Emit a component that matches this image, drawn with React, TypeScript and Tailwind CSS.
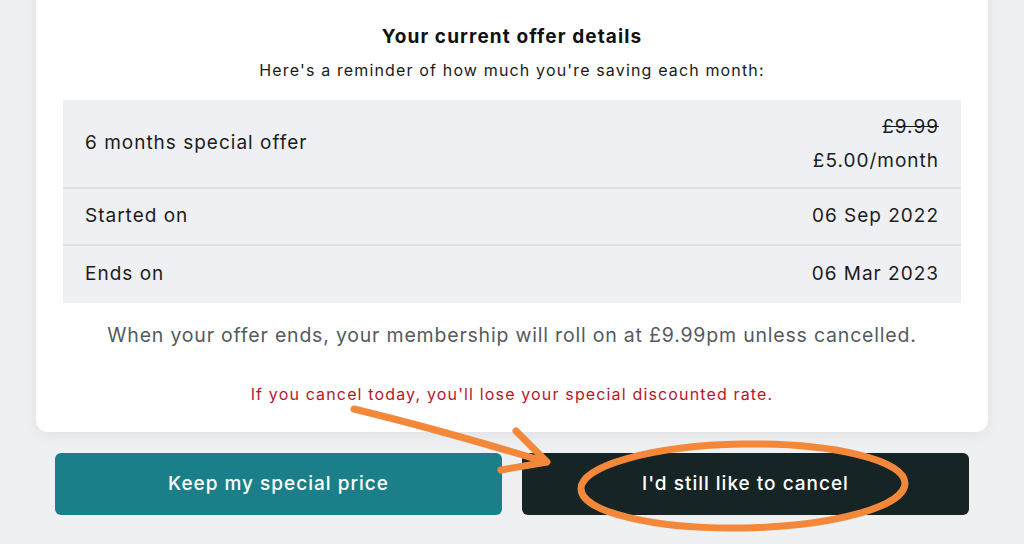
import React from "react"

const rows = [
  { label: "Started on", value: "06 Sep 2022" },
  { label: "Ends on", value: "06 Mar 2023" },
]

function Annotations() {
  // hand-drawn orange arrow + circle over the cancel button
  return (
    <svg
      className="pointer-events-none absolute left-0 top-0"
      width="1024"
      height="544"
      viewBox="0 0 1024 544"
      fill="none"
    >
      <g stroke="#f4883a" strokeWidth="7" strokeLinecap="round" strokeLinejoin="round">
        <path d="M354 409 C420 425 490 445 546 462" />
        <path d="M516 431 L547 462 L501 470" />
        <ellipse cx="743" cy="486" rx="162" ry="42" transform="rotate(-1 743 486)" />
      </g>
    </svg>
  )
}

export default function App() {
  return (
    <div
      className="relative h-[544px] w-[1024px] overflow-hidden bg-[#eff0f2]"
      style={{ fontFamily: "Inter, 'Noto Sans', sans-serif" }}
    >
      <div className="mx-auto -mt-[20px] flex w-[952px] flex-col items-center rounded-b-xl bg-white px-[27px] pb-[27px] pt-[44px] shadow-[0_4px_16px_rgba(0,0,0,0.06)]">
        <h2 className="text-[19px] font-bold leading-[26px] tracking-[1.1px] text-[#111]">
          Your current offer details
        </h2>
        <p className="mt-[9px] text-[16px] leading-[22px] tracking-[1.15px] text-[#1a1a1a]">
          Here's a reminder of how much you're saving each month:
        </p>

        <div className="mt-[19px] w-full bg-[#eff0f3] text-[19px] tracking-[1px] text-[#1c1c1c]">
          <div className="flex h-[89px] items-center justify-between border-b-2 border-[#dfe1e5] px-[22px]">
            <span>6 months special offer</span>
            <div className="flex flex-col items-end leading-[34px]">
              <span className="line-through">£9.99</span>
              <span>£5.00/month</span>
            </div>
          </div>
          {rows.map((r, i) => (
            <div
              key={r.label}
              className={`flex h-[57px] items-center justify-between px-[22px] ${
                i === 0 ? "border-b-2 border-[#dfe1e5]" : ""
              }`}
            >
              <span>{r.label}</span>
              <span>{r.value}</span>
            </div>
          ))}
        </div>

        <p className="mt-[18px] text-[19.5px] leading-[28px] tracking-[0.8px] text-[#555a5e]">
          When your offer ends, your membership will roll on at £9.99pm unless cancelled.
        </p>
        <p className="mt-[34px] text-[16px] leading-[22px] tracking-[1.15px] text-[#b5172c]">
          If you cancel today, you'll lose your special discounted rate.
        </p>
      </div>

      <div className="mx-auto mt-[21px] flex w-[914px] gap-[20px]">
        <button className="flex h-[62px] flex-1 items-center justify-center rounded-md bg-[#1b7f89] text-[19px] font-medium tracking-[1px] text-white">
          Keep my special price
        </button>
        <button className="flex h-[62px] flex-1 items-center justify-center rounded-md bg-[#172425] text-[19px] font-medium tracking-[1px] text-white">
          I'd still like to cancel
        </button>
      </div>

      <Annotations />
    </div>
  )
}
